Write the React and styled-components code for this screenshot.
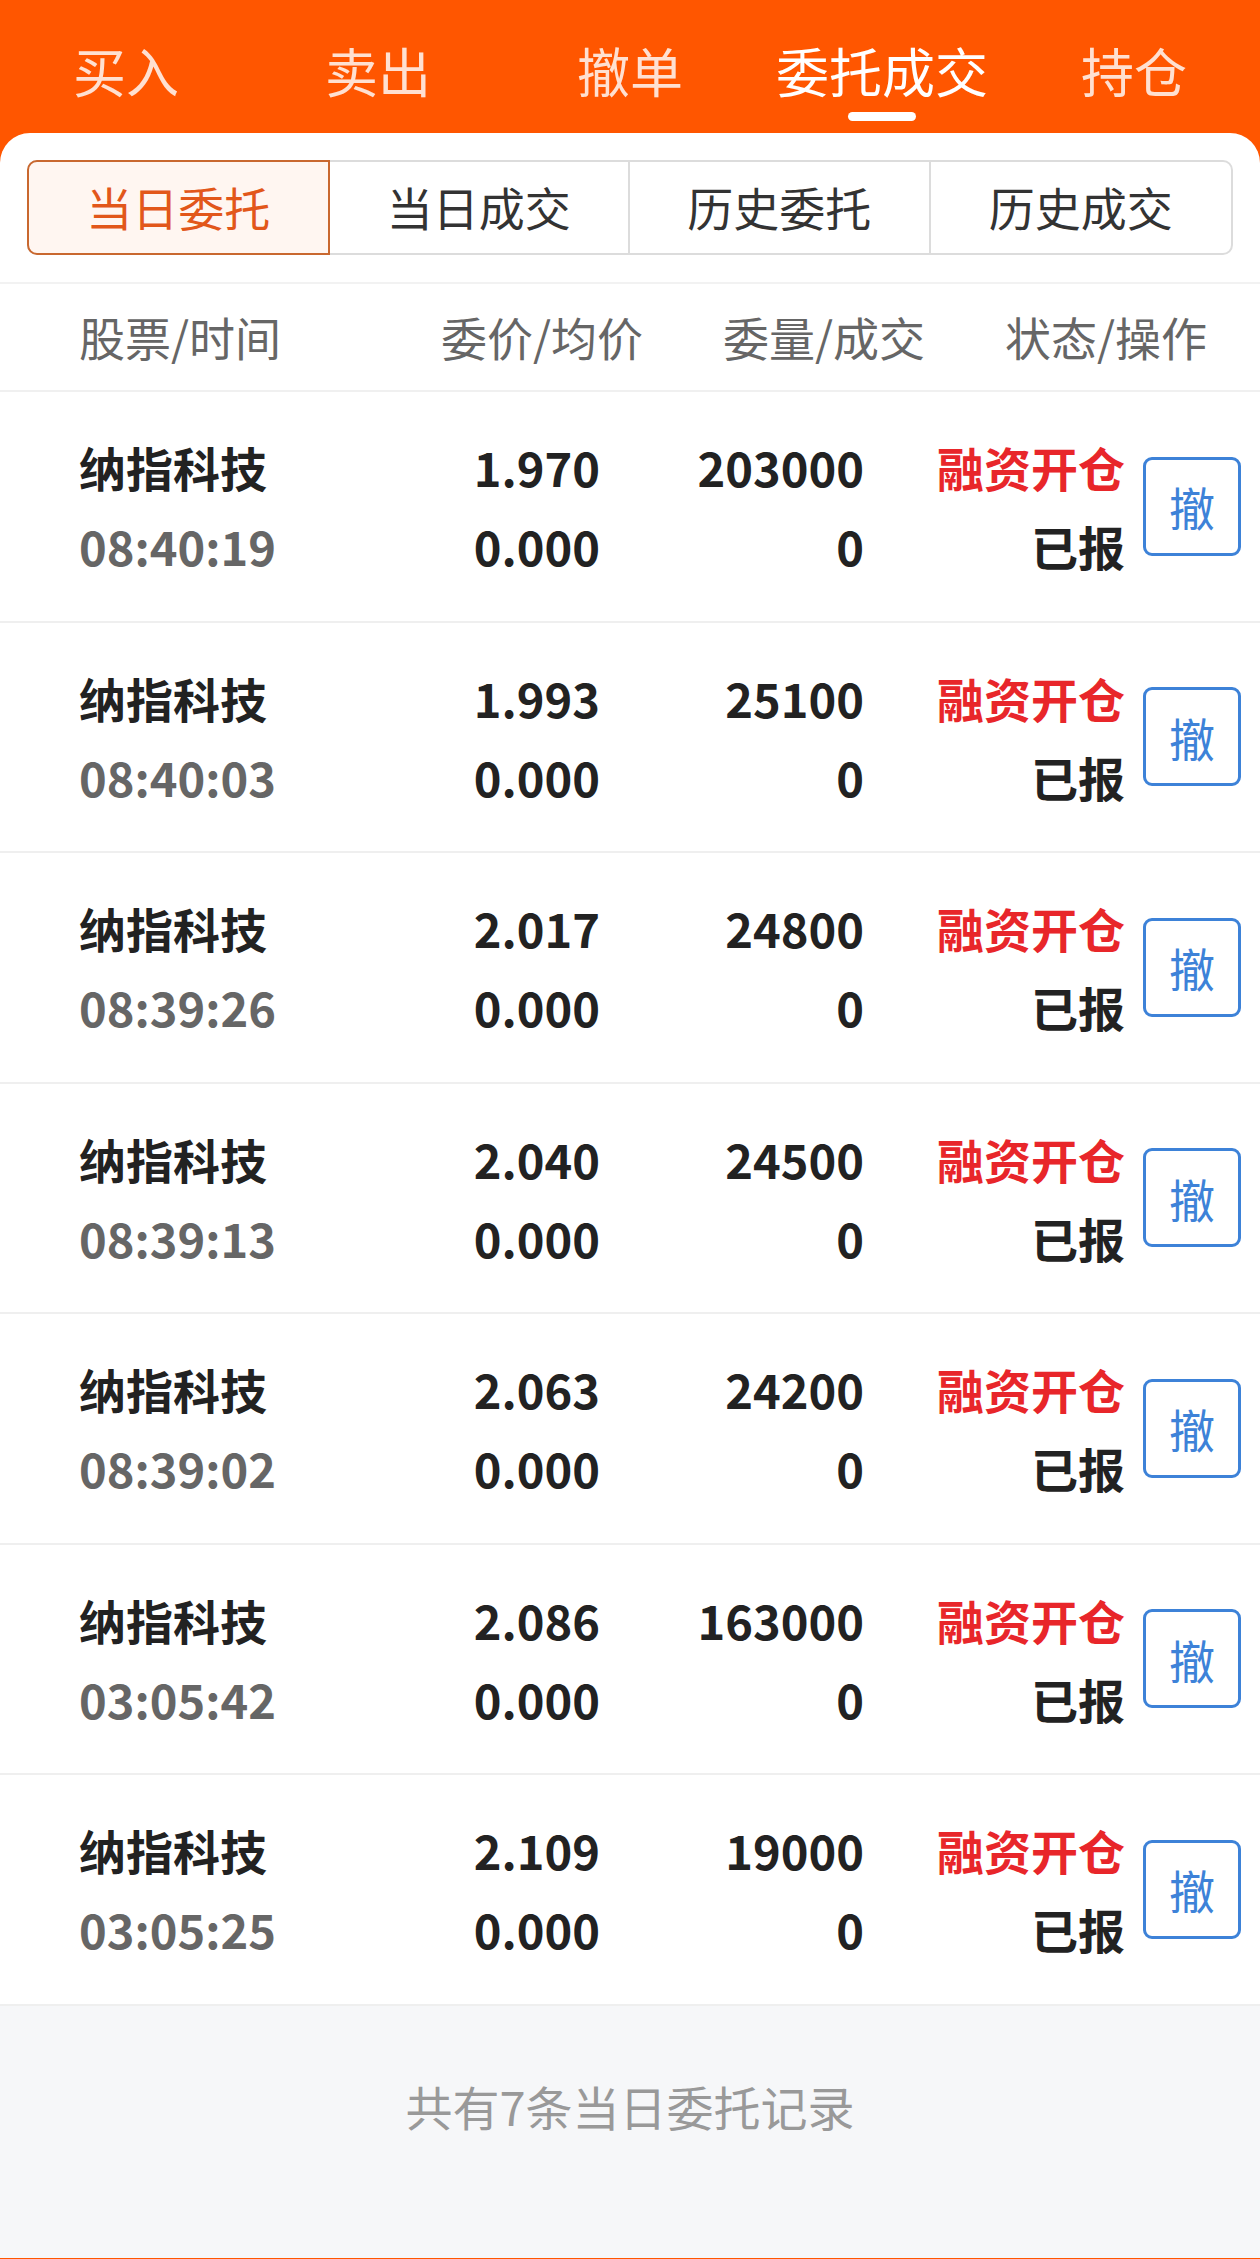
import React from 'react';
import styled, { createGlobalStyle } from 'styled-components';

const GlobalStyle = createGlobalStyle`
    html, body {
        margin: 0;
        padding: 0;
        background: #f6f7f9;
        font-family: "Noto Sans CJK SC", "Noto Sans", sans-serif;
    }
    * { box-sizing: border-box; }
`

const navTabs = ['买入', '卖出', '撤单', '委托成交', '持仓'];
const segTabs = ['当日委托', '当日成交', '历史委托', '历史成交'];
const orders = [
    { time: '08:40:19', price: '1.970', qty: '203000' },
    { time: '08:40:03', price: '1.993', qty: '25100' },
    { time: '08:39:26', price: '2.017', qty: '24800' },
    { time: '08:39:13', price: '2.040', qty: '24500' },
    { time: '08:39:02', price: '2.063', qty: '24200' },
    { time: '03:05:42', price: '2.086', qty: '163000' },
    { time: '03:05:25', price: '2.109', qty: '19000' },
];

export default function App() {
    return (
        <Page>
            <GlobalStyle />
            <NavBar>
                {navTabs.map((t, i) => (
                    <NavTab key={t} $active={i === 3}>
                        <NavLabel>{t}</NavLabel>
                        <Underline $active={i === 3} />
                    </NavTab>
                ))}
            </NavBar>
            <Card>
                <SegWrap>
                    <Segment>
                        {segTabs.map((t, i) => (
                            <SegItem key={t} $active={i === 0}>{t}</SegItem>
                        ))}
                    </Segment>
                </SegWrap>
                <HeaderRow>
                    <HeadCell>股票/时间</HeadCell>
                    <HeadCell $right>委价/均价</HeadCell>
                    <HeadCell $right>委量/成交</HeadCell>
                    <HeadCell $right>状态/操作</HeadCell>
                </HeaderRow>
                {orders.map((o) => (
                    <Row key={o.time}>
                        <Cell>
                            <Line>纳指科技</Line>
                            <Line $gray>{o.time}</Line>
                        </Cell>
                        <Cell $right>
                            <Line>{o.price}</Line>
                            <Line>0.000</Line>
                        </Cell>
                        <Cell $right>
                            <Line>{o.qty}</Line>
                            <Line>0</Line>
                        </Cell>
                        <Cell $right>
                            <Line $red>融资开仓</Line>
                            <Line>已报</Line>
                        </Cell>
                        <CancelButton>撤</CancelButton>
                    </Row>
                ))}
                <Footer>共有7条当日委托记录</Footer>
            </Card>
        </Page>
    )
}

const Page = styled.div`
    background: #ff5600;
    min-height: 2259px;
`

const NavBar = styled.div`
    display: grid;
    grid-template-columns: repeat(5, 1fr);
    height: 133px;
`

const NavTab = styled.div`
    display: flex;
    flex-direction: column;
    align-items: center;
    padding-top: 43px;
    gap: 15px;
    color: ${p => p.$active ? '#ffffff' : 'rgba(255, 255, 255, 0.82)'};
`

const NavLabel = styled.span`
    font-size: 53px;
    line-height: 54px;
    white-space: nowrap;
`

const Underline = styled.span`
    width: 68px;
    height: 9px;
    border-radius: 5px;
    background: ${p => p.$active ? '#ffffff' : 'transparent'};
`

const Card = styled.div`
    background: #ffffff;
    border-radius: 30px 30px 0 0;
    overflow: hidden;
`

const SegWrap = styled.div`
    padding: 27px;
    border-bottom: 2px solid #f2f2f2;
`

const Segment = styled.div`
    display: grid;
    grid-template-columns: repeat(4, 1fr);
    height: 95px;
    border: 2px solid #dcdcdc;
    border-radius: 10px;
`

const SegItem = styled.div`
    display: flex;
    align-items: center;
    justify-content: center;
    padding-bottom: 3px;
    font-size: 46px;
    color: ${p => p.$active ? '#e2571a' : '#333333'};
    background: ${p => p.$active ? '#fff6f1' : 'transparent'};
    border-right: 2px solid #dcdcdc;
    ${p => p.$active && `
        margin: -2px 0 -2px -2px;
        border: 2px solid #c9682f;
        border-radius: 10px 0 0 10px;
    `}
    &:last-child {
        border-right: none;
    }
`

const HeaderRow = styled.div`
    display: grid;
    grid-template-columns: 1fr 282px 282px 282px;
    align-items: center;
    height: 108px;
    padding: 0 53px 3px 79px;
    border-bottom: 2px solid #f0f0f0;
`

const HeadCell = styled.div`
    font-size: 46px;
    color: #666666;
    text-align: ${p => p.$right ? 'right' : 'left'};
    white-space: nowrap;
`

const Row = styled.div`
    display: grid;
    grid-template-columns: 321px 200px 264px 261px 98px;
    align-items: center;
    height: 230.5px;
    padding: 0 19px 0 79px;
    border-bottom: 2px solid #efefef;
    & > button { margin-left: 18px; }
    &:last-of-type { border-bottom: none; }
`

const Cell = styled.div`
    display: flex;
    flex-direction: column;
    align-items: ${p => p.$right ? 'flex-end' : 'flex-start'};
`

const Line = styled.span`
    font-size: 47px;
    line-height: 79px;
    font-weight: 700;
    white-space: nowrap;
    color: ${p => p.$red ? '#e8262a' : p.$gray ? '#666666' : '#222222'};
`

const CancelButton = styled.button`
    width: 98px;
    height: 99px;
    padding: 0;
    border: 3px solid #3d82d8;
    border-radius: 9px;
    background: #ffffff;
    color: #3d82d8;
    font-family: inherit;
    font-size: 46px;
`

const Footer = styled.div`
    background: #f6f7f9;
    height: 252px;
    display: flex;
    align-items: center;
    justify-content: center;
    padding-bottom: 52px;
    font-size: 47px;
    color: #999999;
`
